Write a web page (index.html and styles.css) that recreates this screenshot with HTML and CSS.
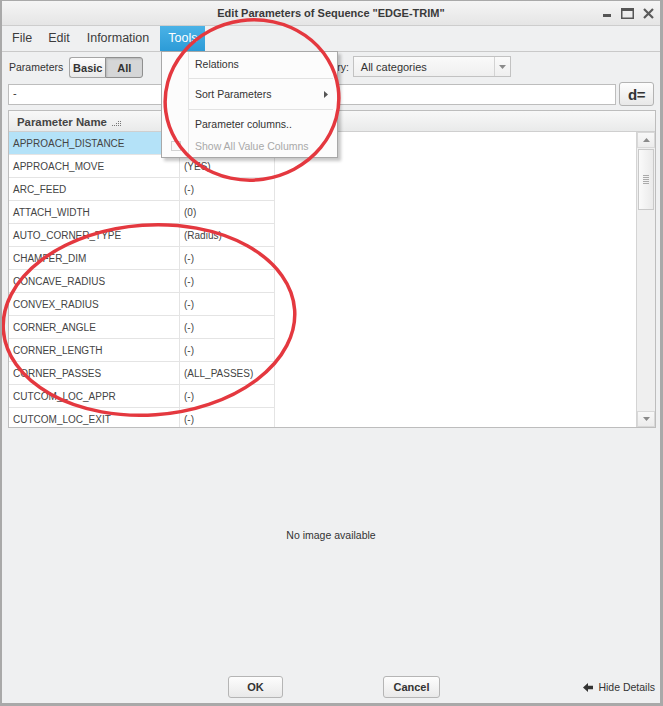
FILE: index.html
```html
<!DOCTYPE html>
<html>
<head>
<meta charset="utf-8">
<link rel="stylesheet" href="styles.css">
</head>
<body>
<div class="window">
  <div class="titlebar">
    <span class="title">Edit Parameters of Sequence "EDGE-TRIM"</span>
    <div class="controls">
      <svg width="9" height="10" viewBox="0 0 9 10"><rect x="0" y="6" width="8" height="3" fill="#555"/></svg>
      <svg width="13" height="11" viewBox="0 0 13 11"><rect x="0.75" y="0.75" width="11.5" height="9.5" fill="none" stroke="#555" stroke-width="1.5"/><rect x="0" y="0" width="13" height="3" fill="#555"/></svg>
      <svg width="11" height="11" viewBox="0 0 11 11"><path d="M1 1 L10 10 M10 1 L1 10" stroke="#5a5a5a" stroke-width="2.2"/></svg>
    </div>
  </div>
  <div class="menubar">
    <span class="mi">File</span>
    <span class="mi">Edit</span>
    <span class="mi">Information</span>
    <span class="mi active">Tools</span>
  </div>
  <div class="toolbar">
    <span class="lbl">Parameters</span>
    <div class="seg">
      <span class="segbtn basic">Basic</span>
      <span class="segbtn pressed">All</span>
    </div>
    <span class="lbl cat">Category:</span>
    <div class="combo">
      <span class="combotext">All categories</span>
      <span class="comboarrow"><svg width="7" height="4" viewBox="0 0 7 4"><path d="M0 0 H7 L3.5 4 Z" fill="#8a8a8a"/></svg></span>
    </div>
  </div>
  <div class="searchrow">
    <div class="search">-</div>
    <div class="dbtn">d=</div>
  </div>
  <div class="table">
    <div class="thead">
      <div class="th name">Parameter Name
        <svg class="sorticon" width="9" height="5" viewBox="0 0 9 5"><g fill="#777"><rect x="0" y="4" width="1" height="1"/><rect x="2" y="4" width="1" height="1"/><rect x="4" y="4" width="1" height="1"/><rect x="6" y="4" width="1" height="1"/><rect x="8" y="4" width="1" height="1"/><rect x="4" y="2" width="1" height="1"/><rect x="6" y="2" width="1" height="1"/><rect x="8" y="2" width="1" height="1"/><rect x="6" y="0" width="1" height="1"/><rect x="8" y="0" width="1" height="1"/></g></svg>
      </div>
      <div class="th val"></div>
      <div class="th rest"></div>
    </div>
    <div class="tbody">
      <div class="rows">
        <div class="row sel"><div class="td name">APPROACH_DISTANCE</div><div class="td val"></div></div>
        <div class="row"><div class="td name">APPROACH_MOVE</div><div class="td val">(YES)</div></div>
        <div class="row"><div class="td name">ARC_FEED</div><div class="td val">(-)</div></div>
        <div class="row"><div class="td name">ATTACH_WIDTH</div><div class="td val">(0)</div></div>
        <div class="row"><div class="td name">AUTO_CORNER_TYPE</div><div class="td val">(Radius)</div></div>
        <div class="row"><div class="td name">CHAMFER_DIM</div><div class="td val">(-)</div></div>
        <div class="row"><div class="td name">CONCAVE_RADIUS</div><div class="td val">(-)</div></div>
        <div class="row"><div class="td name">CONVEX_RADIUS</div><div class="td val">(-)</div></div>
        <div class="row"><div class="td name">CORNER_ANGLE</div><div class="td val">(-)</div></div>
        <div class="row"><div class="td name">CORNER_LENGTH</div><div class="td val">(-)</div></div>
        <div class="row"><div class="td name">CORNER_PASSES</div><div class="td val">(ALL_PASSES)</div></div>
        <div class="row"><div class="td name">CUTCOM_LOC_APPR</div><div class="td val">(-)</div></div>
        <div class="row"><div class="td name">CUTCOM_LOC_EXIT</div><div class="td val">(-)</div></div>
      </div>
      <div class="vscroll">
        <div class="sbtn"><svg width="7" height="4" viewBox="0 0 7 4"><path d="M0 4 H7 L3.5 0 Z" fill="#8a8a8a"/></svg></div>
        <div class="thumb"><svg width="6" height="9" viewBox="0 0 6 9"><g fill="#aaa"><rect y="0" width="6" height="1"/><rect y="2" width="6" height="1"/><rect y="4" width="6" height="1"/><rect y="6" width="6" height="1"/><rect y="8" width="6" height="1"/></g></svg></div>
        <div class="track"></div>
        <div class="sbtn"><svg width="7" height="4" viewBox="0 0 7 4"><path d="M0 0 H7 L3.5 4 Z" fill="#8a8a8a"/></svg></div>
      </div>
    </div>
  </div>
  <div class="preview">No image available</div>
  <div class="footer">
    <div class="btn ok">OK</div>
    <div class="btn cancel">Cancel</div>
    <div class="hide">
      <svg width="10" height="9" viewBox="0 0 10 9"><path d="M0 4.5 L5 0 V2.8 H10 V6.2 H5 V9 Z" fill="#333"/></svg>
      <span>Hide Details</span>
    </div>
  </div>

  <div class="menu">
    <div class="gutter"></div>
    <div class="mitem rel">Relations</div>
    <div class="msep"></div>
    <div class="mitem sub">Sort Parameters<svg class="subarrow" width="4" height="7" viewBox="0 0 4 7"><path d="M0 0 L4 3.5 L0 7 Z" fill="#555"/></svg></div>
    <div class="msep"></div>
    <div class="mitem pc">Parameter columns..</div>
    <div class="mitem dis"><span class="chk"></span>Show All Value Columns</div>
  </div>

  <svg class="annot" width="663" height="706" viewBox="0 0 663 706">
    <ellipse cx="252" cy="100" rx="87" ry="80" transform="rotate(-8 252 100)" fill="none" stroke="#e4383f" stroke-width="3.5"/>
    <ellipse cx="149" cy="320" rx="146" ry="95" transform="rotate(-4 149 320)" fill="none" stroke="#e4383f" stroke-width="3.5"/>
  </svg>
</div>
</body>
</html>
```

FILE: styles.css
```css
* { box-sizing: border-box; }
html, body { margin: 0; padding: 0; }
body {
  font-family: "Liberation Sans", Arial, sans-serif;
  font-size: 10.5px;
  color: #333;
  background: #fff;
}
.window {
  position: relative;
  width: 663px;
  height: 706px;
  background: #eff0f1;
  border-top: 1px solid #a9a9a9;
  border-left: 2px solid #a9a9a9;
  border-right: 3px solid #a9a9a9;
  border-bottom: 3px solid #a9a9a9;
  display: flex;
  flex-direction: column;
  overflow: hidden;
}
.titlebar {
  position: relative;
  height: 25px;
  flex: none;
  background: linear-gradient(#f5f5f5, #e5e5e5);
  border-bottom: 1px solid #cdcdcd;
  display: flex;
  align-items: center;
  justify-content: center;
}
.title {
  font-weight: bold;
  font-size: 11px;
  color: #3a3a3a;
}
.controls {
  position: absolute;
  right: 6px;
  top: 7px;
  display: flex;
  gap: 9px;
  align-items: flex-start;
}
.menubar {
  height: 26px;
  flex: none;
  border-bottom: 1px solid #c9c9c9;
  display: flex;
  padding-left: 3px;
  gap: 3px;
}
.mi {
  font-size: 12.5px;
  line-height: 25px;
  padding: 0 7px;
  color: #3c3c3c;
}
.mi:first-child { padding-right: 6px; }
.mi.active {
  background: linear-gradient(#4ab2e6, #2c9bd7);
  color: #fff;
  padding: 0 8px;
  margin-left: 1px;
}
.toolbar {
  height: 29px;
  flex: none;
  display: flex;
  align-items: center;
  padding-left: 7px;
  padding-top: 0;
}
.lbl { color: #333; }
.seg {
  display: flex;
  margin-left: 6px;
  height: 21px;
  margin-top: 2px;
}
.segbtn {
  font-weight: bold;
  font-size: 11px;
  display: flex;
  align-items: center;
  justify-content: center;
  border: 1px solid #a5a5a5;
}
.segbtn.basic {
  width: 36px;
  border-radius: 3px 0 0 3px;
  background: linear-gradient(#fdfdfd, #e9e9e9);
  border-right: none;
}
.segbtn.pressed {
  width: 38px;
  border-radius: 0 3px 3px 0;
  background: #d5d6d7;
  border-color: #8f8f8f;
  box-shadow: inset 1px 1px 2px rgba(0,0,0,0.15);
}
.cat { margin-left: 160px; }
.combo {
  margin-left: 4px;
  width: 158px;
  height: 21px;
  border: 1px solid #c2c2c2;
  background: linear-gradient(#fafafa, #efefef);
  display: flex;
  align-items: center;
}
.combotext {
  flex: 1;
  padding-left: 7px;
  font-size: 11px;
  color: #333;
}
.comboarrow {
  width: 16px;
  height: 100%;
  border-left: 1px solid #d3d3d3;
  display: flex;
  align-items: center;
  justify-content: center;
}
.searchrow {
  height: 26px;
  flex: none;
  display: flex;
  align-items: center;
  padding-left: 6px;
  gap: 3px;
}
.search {
  width: 608px;
  height: 21px;
  background: #fff;
  border: 1px solid #bdbdbd;
  padding-left: 4px;
  line-height: 17px;
  font-size: 11px;
}
.dbtn {
  width: 35px;
  height: 24px;
  border: 1px solid #b3b3b3;
  border-radius: 3px;
  background: linear-gradient(#fdfdfd, #e8e8e8);
  font-size: 15px;
  font-weight: bold;
  color: #333;
  display: flex;
  align-items: center;
  justify-content: center;
  letter-spacing: -0.5px;
}
.table {
  flex: none;
  margin-top: 3px;
  margin-left: 6px;
  width: 648px;
  height: 318px;
  border: 1px solid #bdbdbd;
  background: #fff;
  display: flex;
  flex-direction: column;
}
.thead {
  height: 21px;
  flex: none;
  display: flex;
  background: linear-gradient(#f8f8f8, #e9eaea);
  border-bottom: 1px solid #cfcfcf;
}
.th {
  height: 100%;
  display: flex;
  align-items: center;
  font-weight: bold;
  font-size: 11.4px;
  color: #444;
  padding-top: 2px;
}
.th.name { width: 171px; padding-left: 8px; border-right: 1px solid #d6d6d6; }
.th.val { width: 95px; padding-left: 6px; border-right: 1px solid #d6d6d6; }
.th.rest { flex: 1; }
.sorticon { margin-left: 5px; margin-top: 3px; }
.tbody {
  flex: 1;
  display: flex;
  overflow: hidden;
}
.rows {
  flex: 1;
  overflow: hidden;
}
.row {
  display: flex;
  height: 23px;
}
.td {
  height: 23px;
  display: flex;
  align-items: center;
  font-size: 10px;
  color: #444;
  border-bottom: 1px solid #e4e4e4;
  border-right: 1px solid #e4e4e4;
}
.td.name { width: 171px; padding-left: 4px; }
.td.val { width: 95px; padding-left: 4px; }
.row.sel .td { background: #b4e2f8; }
.vscroll {
  width: 19px;
  flex: none;
  background: #efefef;
  border-left: 1px solid #d4d4d4;
  display: flex;
  flex-direction: column;
}
.sbtn {
  height: 16px;
  flex: none;
  display: flex;
  align-items: center;
  justify-content: center;
  background: linear-gradient(#f8f8f8, #ececec);
  border: 1px solid #d8d8d8;
}
.thumb {
  height: 61px;
  flex: none;
  margin: 1px 1px 0 1px;
  border: 1px solid #c9c9c9;
  background: linear-gradient(90deg, #fafafa, #eaeaea);
  display: flex;
  align-items: center;
  justify-content: center;
}
.track { flex: 1; }
.preview {
  height: 214px;
  flex: none;
  display: flex;
  align-items: center;
  justify-content: center;
  color: #333;
}
.footer {
  flex: 1;
  display: flex;
  align-items: flex-end;
  padding-bottom: 5px;
  padding-right: 5px;
}
.btn {
  height: 22px;
  border: 1px solid #b5b5b5;
  border-radius: 3px;
  background: linear-gradient(#fdfdfd, #e9e9e9);
  font-weight: bold;
  font-size: 11px;
  color: #333;
  display: flex;
  align-items: center;
  justify-content: center;
}
.btn.ok { width: 55px; margin-left: 226px; }
.btn.cancel { width: 57px; margin-left: 100px; }
.hide {
  margin-left: auto;
  height: 22px;
  display: flex;
  align-items: center;
  gap: 5px;
  color: #333;
}
.menu {
  position: absolute;
  left: 159px;
  top: 50px;
  width: 177px;
  background: #fcfcfc;
  border: 1px solid #a8a8a8;
  box-shadow: 3px 3px 3px rgba(0,0,0,0.22);
  padding: 1px 0 1px 0;
}
.gutter {
  position: absolute;
  left: 26px;
  top: 0;
  bottom: 0;
  width: 1px;
  background: #e4e4e4;
}
.mitem {
  position: relative;
  padding-left: 33px;
  display: flex;
  align-items: center;
  color: #333;
}
.mitem.rel { height: 25px; padding-bottom: 3px; }
.mitem.sub { height: 30px; }
.mitem.pc { height: 26px; padding-top: 2px; }
.mitem.dis { height: 20px; color: #a9a9a9; }
.msep {
  height: 1px;
  margin-left: 27px;
  margin-right: 4px;
  background: #e2e2e2;
}
.subarrow {
  position: absolute;
  right: 9px;
  top: 12px;
}
.chk {
  position: absolute;
  left: 9px;
  top: 5px;
  width: 10px;
  height: 10px;
  border: 1px solid #d2d2d2;
  background: #fafafa;
}
.annot {
  position: absolute;
  left: -2px;
  top: -1px;
  pointer-events: none;
}
```
